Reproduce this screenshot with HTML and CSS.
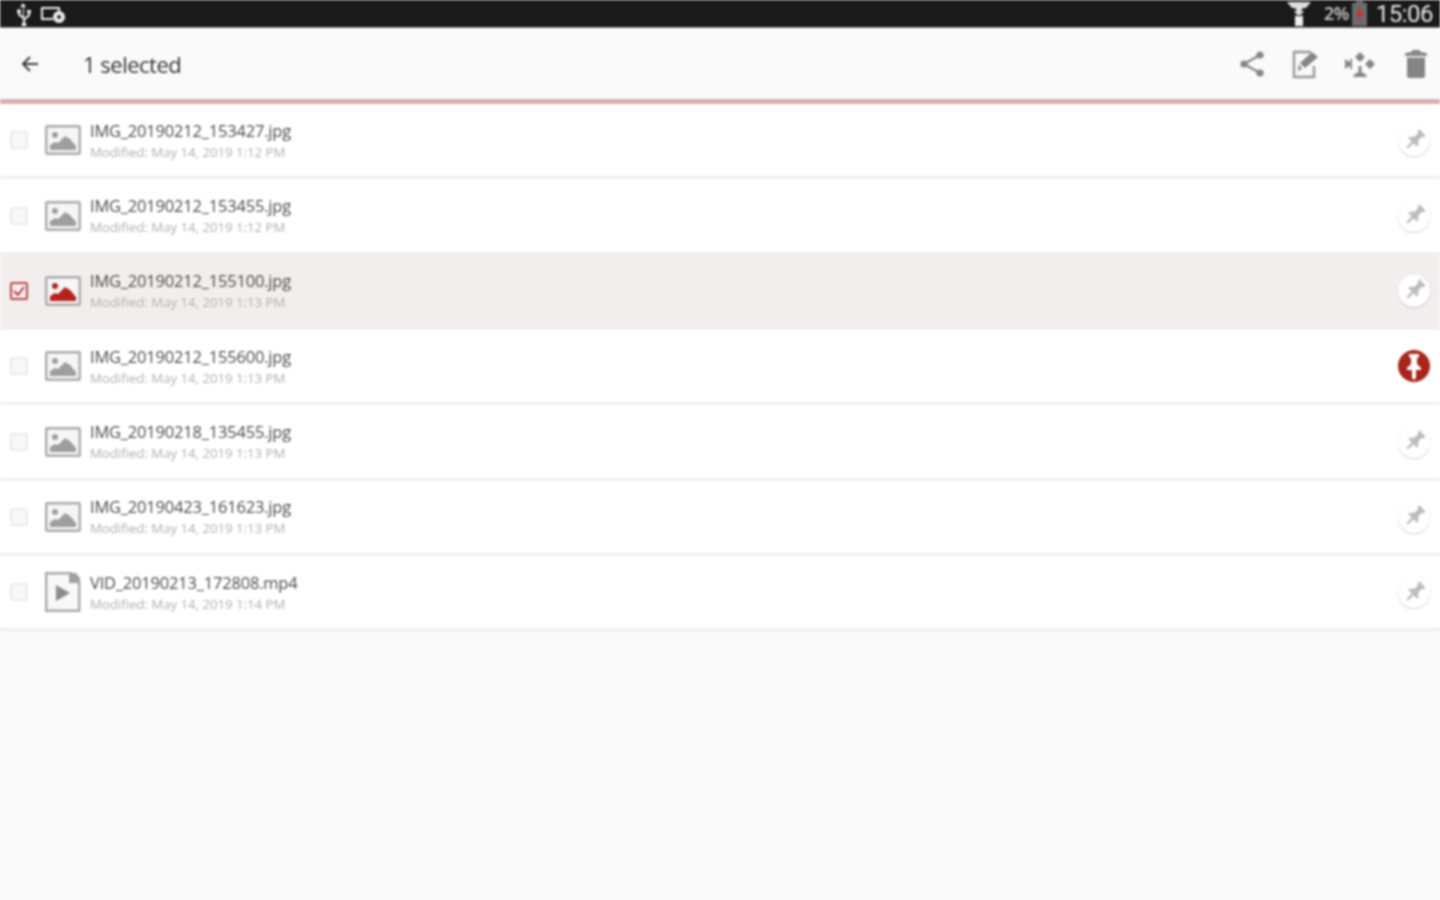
FILE: index.html
```html
<!DOCTYPE html>
<html lang="en">
<head>
  <meta charset="UTF-8">
  <title>1 selected</title>
  <link rel="stylesheet" href="styles.css">
</head>
<body>

<svg class="defs" width="0" height="0">
  <symbol id="picture" viewBox="0 0 36 30">
    <rect x="1.200" y="1.200" width="33.600" height="27.600" rx="1" fill="#f6f6f6" stroke="#aaa" stroke-width="2.400"/>
    <circle cx="10" cy="10" r="3" fill="currentColor"/>
    <path d="M5 25v-5l5-3 3 1 7-7 5 3 6 7v4z" fill="currentColor"/>
  </symbol>
  <symbol id="video" viewBox="0 0 36 40">
    <path d="M1.200 1.200h25l8 8v29.600H1.200z" fill="#f8f8f8" stroke="#aaa" stroke-width="2.400"/>
    <path d="M24 1h7l4 5v5H24z" fill="#a0a0a0"/>
    <path d="M11 13l14 8-14 8z" fill="#8c8c8c"/>
  </symbol>
  <symbol id="pin" viewBox="0 0 24 28">
    <g transform="rotate(45 12 14)">
      <path d="M7 1h10v3l-2 1v6l4 4v2h-5.500v7l-1.500 3-1.500-3v-7H5v-2l4-4V5L7 4z" fill="currentColor"/>
    </g>
  </symbol>
</svg>

<div class="status-bar">
  <div class="status-left">
    <svg width="18" height="24" viewBox="0 0 18 24"><path d="M9 1l3 4h-2v11l4-3v-2h-1V8h4v3h-1v3l-5 4v2.500a2.500 2.500 0 1 1-2 0V17l-5-4v-2a2 2 0 1 1 2 0v1l3 2V5H6z" fill="#eee"/></svg>
    <svg width="26" height="20" viewBox="0 0 26 20"><path d="M2 3h18v5h-2V5H3v9h10v2H1V3z" fill="#eee"/><circle cx="19" cy="13" r="6" fill="#eee"/><circle cx="19" cy="13" r="2" fill="#222"/></svg>
  </div>
  <div class="status-right">
    <svg width="26" height="26" viewBox="0 0 26 26"><path d="M1 1h24l-5 6h-3l-2 3h3l-3 4h-4L8 10h3L9 7H6z" fill="#ddd"/><rect x="9" y="15" width="8" height="10" fill="#eee"/></svg>
    <span class="battery-text">2%</span>
    <svg width="15" height="25" viewBox="0 0 15 25"><rect x="4" y="0" width="7" height="3" fill="#777"/><rect x="0" y="2" width="15" height="23" fill="#6b6b6b"/><path d="M9 5L4 14h3l-1 7 5-10H8z" fill="#d8281e"/></svg>
    <span class="clock">15:06</span>
  </div>
</div>

<header class="action-bar">
  <div class="action-left">
    <svg class="back" width="20" height="20" viewBox="0 0 20 20"><path d="M18 10H3M10 3l-7 7 7 7" fill="none" stroke="#3a3a3a" stroke-width="2"/></svg>
    <span class="action-title">1 selected</span>
  </div>
  <div class="action-icons">
    <span class="icon-slot"><svg width="26" height="28" viewBox="0 0 26 28"><path d="M21 5L5 14l16 9" fill="none" stroke="#858585" stroke-width="2.200"/><circle cx="21" cy="5" r="3.600" fill="#858585"/><circle cx="5" cy="14" r="3.600" fill="#858585"/><circle cx="21" cy="23" r="3.600" fill="#858585"/></svg></span>
    <span class="icon-slot"><svg width="28" height="30" viewBox="0 0 28 30"><path d="M19 3H2v25h20V17" fill="none" stroke="#999" stroke-width="2.400"/><path d="M7 15l3 5-4 2zM8 14L20 3l6 5-13 11z" fill="#858585"/></svg></span>
    <span class="icon-slot"><svg width="32" height="30" viewBox="0 0 32 30"><path d="M16 3l5 5-5 5-5-5zM26 10l5 5-5 5-5-5zM1 10l5 3.500V10h2v10H6v-3.500L1 20zM14.500 17h3v6l5 3v2H9.500v-2l5-3z" fill="#858585"/></svg></span>
    <span class="icon-slot trash"><svg width="24" height="28" viewBox="0 0 24 28"><path d="M1 3.500C5 1 19 1 23 3.500V6H1zM3 7.500h18v18a2.500 2.500 0 0 1-2.500 2.500h-13A2.500 2.500 0 0 1 3 25.500zM8 0h8v2H8z" fill="#858585"/></svg></span>
  </div>
</header>

<ul class="file-list">
  <li class="file-row">
    <span class="check"></span>
    <svg class="thumb" width="36" height="30"><use href="#picture"/></svg>
    <div class="file-info"><div class="file-name">IMG_20190212_153427.jpg</div><div class="file-date">Modified: May 14, 2019 1:12 PM</div></div>
    <span class="pin"><svg width="21" height="25"><use href="#pin"/></svg></span>
  </li>
  <li class="file-row">
    <span class="check"></span>
    <svg class="thumb" width="36" height="30"><use href="#picture"/></svg>
    <div class="file-info"><div class="file-name">IMG_20190212_153455.jpg</div><div class="file-date">Modified: May 14, 2019 1:12 PM</div></div>
    <span class="pin"><svg width="21" height="25"><use href="#pin"/></svg></span>
  </li>
  <li class="file-row selected">
    <span class="check">
      <svg width="14" height="14" viewBox="0 0 14 14"><path d="M2 7l4 4 6-8" fill="none" stroke="#b03030" stroke-width="1.800"/></svg>
    </span>
    <svg class="thumb" width="36" height="30"><use href="#picture"/></svg>
    <div class="file-info"><div class="file-name">IMG_20190212_155100.jpg</div><div class="file-date">Modified: May 14, 2019 1:13 PM</div></div>
    <span class="pin"><svg width="21" height="25"><use href="#pin"/></svg></span>
  </li>
  <li class="file-row">
    <span class="check"></span>
    <svg class="thumb" width="36" height="30"><use href="#picture"/></svg>
    <div class="file-info"><div class="file-name">IMG_20190212_155600.jpg</div><div class="file-date">Modified: May 14, 2019 1:13 PM</div></div>
    <span class="pin pinned">
      <svg width="24" height="28" viewBox="0 0 24 28"><path d="M7 2h10v3l-2 1v6l4 4v2h-5v8l-2 2-2-2v-8H5v-2l4-4V6L7 5z" fill="currentColor"/></svg>
    </span>
  </li>
  <li class="file-row">
    <span class="check"></span>
    <svg class="thumb" width="36" height="30"><use href="#picture"/></svg>
    <div class="file-info"><div class="file-name">IMG_20190218_135455.jpg</div><div class="file-date">Modified: May 14, 2019 1:13 PM</div></div>
    <span class="pin"><svg width="21" height="25"><use href="#pin"/></svg></span>
  </li>
  <li class="file-row">
    <span class="check"></span>
    <svg class="thumb" width="36" height="30"><use href="#picture"/></svg>
    <div class="file-info"><div class="file-name">IMG_20190423_161623.jpg</div><div class="file-date">Modified: May 14, 2019 1:13 PM</div></div>
    <span class="pin"><svg width="21" height="25"><use href="#pin"/></svg></span>
  </li>
  <li class="file-row">
    <span class="check"></span>
    <svg class="thumb" width="36" height="40"><use href="#video"/></svg>
    <div class="file-info"><div class="file-name">VID_20190213_172808.mp4</div><div class="file-date">Modified: May 14, 2019 1:14 PM</div></div>
    <span class="pin"><svg width="21" height="25"><use href="#pin"/></svg></span>
  </li>
</ul>

</body>
</html>
```

FILE: styles.css
```css
html, body {
  margin: 0;
  height: 100%;
  overflow: hidden;
}
body {
  font-family: "Open Sans", "Liberation Sans", sans-serif;
  background-color: #fafafa;
  color: #555;
  /* the reference is an upscaled, soft capture */
  filter: blur(0.8px);
}
.defs {
  position: absolute;
}
.status-bar {
  height: 27px;
  background-color: #1a1a1a;
  border-bottom: 1px solid #8a8a8a;
  display: flex;
  justify-content: space-between;
  align-items: center;
  padding: 0 7px 0 14px;
}
.status-left,
.status-right {
  display: flex;
  align-items: center;
}
.status-left {
  gap: 8px;
}
.status-right {
  gap: 3px;
}
.battery-text {
  margin-left: 9px;
  font-size: 18px;
  line-height: 27px;
  font-weight: 600;
  letter-spacing: -0.5px;
  color: #ccc;
}
.clock {
  margin: 2px 0 0 6px;
  font-family: Roboto, sans-serif;
  font-size: 24px;
  line-height: 25px;
  letter-spacing: -0.5px;
  color: #e6e6e6;
}
.action-bar {
  height: 71px;
  background-color: #fafafa;
  border-bottom: 5px solid #d9aeae;
  display: flex;
  justify-content: space-between;
  align-items: center;
  padding-left: 20px;
}
.action-left {
  display: flex;
  align-items: center;
}
.action-title {
  margin-left: 43px;
  font-size: 22px;
  letter-spacing: -0.5px;
  color: #333;
}
.action-icons {
  display: flex;
  align-items: center;
}
.icon-slot {
  width: 54px;
  display: flex;
  justify-content: center;
}
.icon-slot.trash {
  width: 48px;
  margin-left: 5px;
}
.file-list {
  list-style: none;
  margin: 0;
  padding: 0;
}
.file-row {
  box-sizing: border-box;
  height: 75.35px;
  padding: 0 10px 0 10px;
  background-color: #fff;
  border-bottom: 3px solid #f0f0f0;
  display: flex;
  align-items: center;
}
.file-row.selected {
  background-color: #f3eeee;
}
.check {
  box-sizing: border-box;
  width: 18px;
  height: 18px;
  border: 2px solid #ececec;
  border-radius: 2px;
  background-color: #f8f8f8;
  display: flex;
  align-items: center;
  justify-content: center;
}
.selected .check {
  border-color: #b84a4a;
  background-color: #f8eeee;
}
.thumb {
  margin-left: 17px;
  color: #9e9e9e;
  flex-shrink: 0;
}
.selected .thumb {
  color: #b5221b;
}
.file-info {
  flex: 1;
  margin-left: 9px;
  padding-top: 2px;
}
.file-name {
  font-size: 16.500px;
  line-height: 22px;
  letter-spacing: -0.2px;
  color: #4a4a4a;
}
.file-date {
  font-size: 13.200px;
  line-height: 21px;
  color: #b0b0b0;
}
.pin {
  width: 32px;
  height: 32px;
  border-radius: 50%;
  background-color: #fff;
  box-shadow: 0 1px 2px rgba(0, 0, 0, 0.18);
  color: #bcbcbc;
  display: flex;
  align-items: center;
  justify-content: center;
}
.pin.pinned {
  background-color: #a8251c;
  box-shadow: none;
  color: #fff;
}
```
